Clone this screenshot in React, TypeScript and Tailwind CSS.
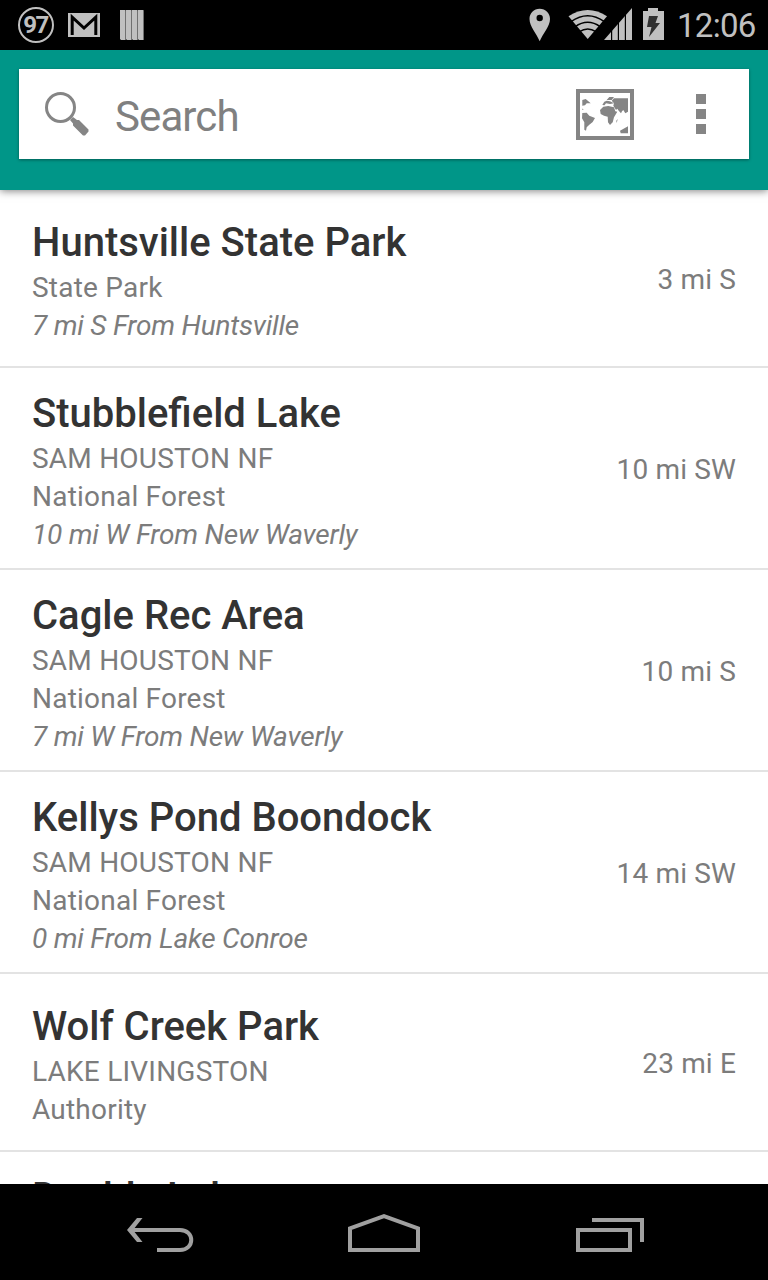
type Place = { name: string; lines: string[]; note?: string; distance: string };

const places: Place[] = [
  { name: "Huntsville State Park", lines: ["State Park"], note: "7 mi S From Huntsville", distance: "3 mi S" },
  { name: "Stubblefield Lake", lines: ["SAM HOUSTON NF", "National Forest"], note: "10 mi W From New Waverly", distance: "10 mi SW" },
  { name: "Cagle Rec Area", lines: ["SAM HOUSTON NF", "National Forest"], note: "7 mi W From New Waverly", distance: "10 mi S" },
  { name: "Kellys Pond Boondock", lines: ["SAM HOUSTON NF", "National Forest"], note: "0 mi From Lake Conroe", distance: "14 mi SW" },
  { name: "Wolf Creek Park", lines: ["LAKE LIVINGSTON", "Authority"], distance: "23 mi E" },
  { name: "Double Lake", lines: [], distance: "" },
];

function StatusBar() {
  return (
    <div className="flex h-[50px] shrink-0 items-center bg-black text-[#c0c0c0]">
      <div className="ml-[18px] flex h-9 w-9 items-center justify-center rounded-full border-2 border-[#c0c0c0] pr-px text-[24px] font-bold leading-none tracking-[-1.5px]">
        97
      </div>
      <svg className="ml-[14px] h-6 w-8" viewBox="0 0 32 24">
        <path fill="#c0c0c0" d="M0 0h32v24H0z" />
        <path fill="none" stroke="#000" strokeWidth="3" d="M4.2 22V4.2L16 15 27.8 4.2V22" />
      </svg>
      <svg className="ml-5 h-[30px] w-6" viewBox="0 0 24 30">
        <path fill="#c0c0c0" d="M0 0h5l1 1v29H1l-1-1zM6 0h5l1 1v29H7l-1-1zM12 0h5l1 1v29h-5l-1-1zM18 0h5l1 1v29h-5l-1-1z" />
        <path stroke="#707070" d="M5.5 1v29M11.5 1v29M17.5 1v29M23.5 1v29" />
      </svg>
      <svg className="ml-auto h-[50px] w-[140px]" viewBox="524 0 140 50">
        <path fill="#c0c0c0" fillRule="evenodd" d="M539.7 8.7c-5.9 0-10.2 4.4-10.2 10.2 0 7.2 7 14.5 10.2 22.3 3.2-7.8 10.3-15.1 10.3-22.3 0-5.8-4.4-10.2-10.300-10.200zm0 6.100a3.200 3.200 0 1 1 0 6.400 3.200 3.200 0 0 1 0-6.400z" />
        <path fill="#c0c0c0" d="M568.500 16.300Q587.700 3.500 607 16.300L587.700 39z" />
        <path fill="none" stroke="#000" strokeWidth="1.500" d="M571 21.700q16.700-12 33.400 0M575 26.800q12.700-9 25.400 0M579.500 31.700q8.200-5.400 16.400 0" />
        <path fill="#c0c0c0" d="M604 40L632 8v32z" />
        <path stroke="#000" strokeWidth="1.200" d="M611.600 8v32M618.400 8v32M625.400 8v32" />
        <path fill="#c0c0c0" d="M643 11h5V8h10v3h6v29h-21z" />
        <path fill="#303030" d="M649 16h9l-2.500 7h4.500l-11 14 2.500-10H647z" />
      </svg>
      <div className="ml-[13px] w-[91px] pt-[2px] text-[33px] leading-[48px] tracking-[-0.700px]">12:06</div>
    </div>
  );
}

function MapIcon() {
  return (
    <svg className="h-[51px] w-[58px]" viewBox="0 0 58 51">
      <path fill="none" stroke="#858585" strokeWidth="4" d="M2 2h54v47H2z" />
      <g fill="#858585">
        <path d="M6.300 11L9.700 10l5 4.300-4 0-1.700 2-2.700.4zM6 19.500l2 1.500-2-.4z" />
        <path d="M6.300 24l4.400-.3 2.600 3L19 29l-2.300 4-3.400 2.700-2.600 2.600-.7 3.400-1.700-1v-7.400L6 29.300z" />
        <path d="M24 21l3.300-3.300 5-.7 5.700 1.300 1.300 4 2 .4-3.300 5.600-1.300 5L34 36l-2-2.700-.3-5.600-3.700-1-3.300-1.700z" />
        <path d="M35.700 11.700L38 9.300h14v13.400l-2.700 1.600-2-3.300-1.300 1.300-1 2-2.300-2.600-1.400-2-1.300 1.300-2.700-4.300.7-2.400z" />
        <path d="M26.300 16l2-3.300 2.400-1 3.300.6 4 2-4 .7-4-.7-1.500 2zM30.700 11l2.600-3H38l-2.300 3zM40.300 31.700l1.400-1.700-1 4zM44 41.700l8-4.400v7h-7.300z" />
      </g>
    </svg>
  );
}

function Header() {
  return (
    <header className="relative z-10 flex h-[140px] shrink-0 flex-col bg-[#009688] px-[19px] pt-[19px] shadow-[0_1px_8px_rgba(0,0,0,0.5)]">
      <div className="flex h-[90px] items-center bg-white text-[#808080] shadow-[0_1px_3px_rgba(0,0,0,0.4)]">
        <svg className="ml-[26px] h-11 w-11" viewBox="0 0 44 44">
          <circle cx="15.500" cy="15.500" r="14" fill="none" stroke="#858585" strokeWidth="3" />
          <path fill="#858585" d="M25 28l3-3 4 3h2l9.500 9.500v2L40 43.500h-2L28 33.500v-2z" />
        </svg>
        <div className="ml-[26px] pt-[6px] text-[42px] leading-[50px] tracking-[-0.900px]">Search</div>
        <div className="ml-auto mr-[62px]">
          <MapIcon />
        </div>
        <div className="mr-[43px] flex flex-col gap-[5px]">
          <div className="h-[10px] w-[10px] bg-[#858585]" />
          <div className="h-[10px] w-[10px] bg-[#858585]" />
          <div className="h-[10px] w-[10px] bg-[#858585]" />
        </div>
      </div>
    </header>
  );
}

function PlaceRow({ place }: { place: Place }) {
  return (
    <li className="flex min-h-[178px] shrink-0 items-center justify-between border-b-2 border-[#e3e3e3] px-8 py-[14px] text-[28px] leading-[38px] text-[#7c7c7c] last:min-h-0 last:items-start last:border-b-0">
      <div className="pt-2">
        <h2 className="pb-[3px] text-[40px] font-medium leading-[47px] text-[#333333]">{place.name}</h2>
        {place.lines.map((line) => (
          <p key={line} className="tracking-[0.220px]">{line}</p>
        ))}
        {place.note && <p className="italic tracking-[-0.220px]">{place.note}</p>}
      </div>
      <div className="pt-1 tracking-[0.150px]">{place.distance}</div>
    </li>
  );
}

function NavigationBar() {
  return (
    <nav className="flex h-24 shrink-0 items-center bg-black">
      <svg className="h-24 w-full" viewBox="0 1184 768 96" fill="none" stroke="#a0a0a0" strokeWidth="4">
        <path d="M130 1230h50c15 0 15 20 0 20h-23" />
        <path fill="#a0a0a0" stroke="none" d="M127 1230l10-12h5.500l-9.500 12 9.500 12H137z" />
        <path d="M350 1228.400l34-12.200 34 12.200V1250h-68z" />
        <path d="M578 1230h52v20h-52zM592 1220h50v22" />
      </svg>
    </nav>
  );
}

export default function App() {
  return (
    <div className="flex h-[1280px] w-[768px] flex-col overflow-hidden bg-white font-['Roboto',sans-serif]">
      <StatusBar />
      <Header />
      <ul className="flex min-h-0 flex-1 flex-col overflow-hidden">
        {places.map((place) => (
          <PlaceRow key={place.name} place={place} />
        ))}
      </ul>
      <NavigationBar />
    </div>
  );
}
